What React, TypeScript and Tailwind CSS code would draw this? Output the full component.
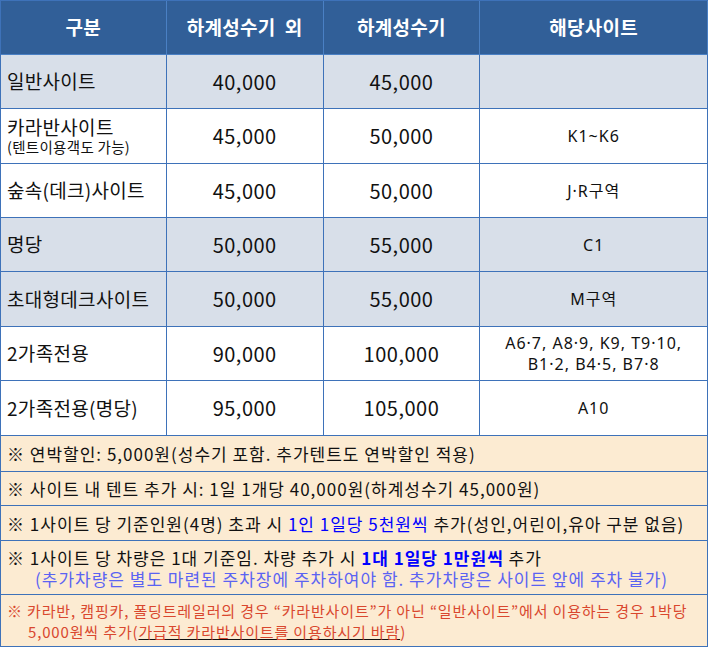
import React from "react";

const FONT = { fontFamily: '"Noto Sans CJK KR", "Noto Sans", sans-serif' };

type Row = {
  label: React.ReactNode;
  off: string;
  peak: string;
  site: React.ReactNode;
  striped: boolean;
  h: string;
};

const rows: Row[] = [
  { label: "일반사이트", off: "40,000", peak: "45,000", site: "", striped: true, h: "h-[54px]" },
  {
    label: (
      <div>
        <div className="text-[19px] leading-[22px]">카라반사이트</div>
        <div className="text-[14.5px] leading-[18px]">(텐트이용객도 가능)</div>
      </div>
    ),
    off: "45,000",
    peak: "50,000",
    site: "K1~K6",
    striped: false,
    h: "h-[55px]",
  },
  { label: "숲속(데크)사이트", off: "45,000", peak: "50,000", site: "J·R구역", striped: false, h: "h-[54px]" },
  { label: "명당", off: "50,000", peak: "55,000", site: "C1", striped: true, h: "h-[54px]" },
  { label: "초대형데크사이트", off: "50,000", peak: "55,000", site: "M구역", striped: true, h: "h-[55px]" },
  {
    label: "2가족전용",
    off: "90,000",
    peak: "100,000",
    site: (
      <div className="leading-[21px]">
        <div>A6·7, A8·9, K9, T9·10,</div>
        <div>B1·2, B4·5, B7·8</div>
      </div>
    ),
    striped: false,
    h: "h-[54px]",
  },
  { label: "2가족전용(명당)", off: "95,000", peak: "105,000", site: "A10", striped: false, h: "h-[55px]" },
];

function Note({ h, children }: { h: string; children: React.ReactNode }) {
  return (
    <div className={`${h} flex flex-col justify-center whitespace-nowrap border-b border-r border-[#3e72b9] bg-[#fcebd2] px-[6px]`}>
      {children}
    </div>
  );
}

export default function App() {
  return (
    <div className="w-[709px] bg-white text-[#111]" style={FONT}>
      <div className="w-[708px] border-l border-t border-[#3e72b9]">
        {/* 헤더 */}
        <div className="flex h-[54px] bg-[#315f98] text-[19px] font-bold tracking-[0.3px] text-white">
          <div className="flex w-[166px] items-center justify-center border-r border-b border-[#4a80c4]">구분</div>
          <div className="flex w-[157px] items-center justify-center border-r border-b border-[#4a80c4]">하계성수기&nbsp; 외</div>
          <div className="flex w-[157px] items-center justify-center border-r border-b border-[#4a80c4]">하계성수기</div>
          <div className="flex w-[228px] items-center justify-center border-r border-b border-[#4a80c4]">해당사이트</div>
        </div>

        {rows.map((r, i) => (
          <div key={i} className={`flex ${r.h} ${r.striped ? "bg-[#d8dfe9]" : "bg-white"}`}>
            <div className="flex w-[166px] items-center border-r border-b border-[#3e72b9] pl-[6px] text-[19px] tracking-[0.3px]">
              {r.label}
            </div>
            <div className="flex w-[157px] items-center justify-center border-r border-b border-[#3e72b9] text-[20px] tracking-[0.5px]">
              {r.off}
            </div>
            <div className="flex w-[157px] items-center justify-center border-r border-b border-[#3e72b9] text-[20px] tracking-[0.5px]">
              {r.peak}
            </div>
            <div className="flex w-[228px] items-center justify-center border-r border-b border-[#3e72b9] text-center font-['Noto_Sans','Noto_Sans_CJK_KR',sans-serif] text-[16px] tracking-[1px]">
              {r.site}
            </div>
          </div>
        ))}

        {/* 안내사항 */}
        <div className="text-[17px] leading-[21px] tracking-[1px]">
          <Note h="h-[36px]">
            <div>※ 연박할인: 5,000원(성수기 포함. 추가텐트도 연박할인 적용)</div>
          </Note>
          <Note h="h-[34px]">
            <div>※ 사이트 내 텐트 추가 시: 1일 1개당 40,000원(하계성수기 45,000원)</div>
          </Note>
          <Note h="h-[35px]">
            <div>
              ※ 1사이트 당 기준인원(4명) 초과 시 <span className="text-[#0000ff]">1인 1일당 5천원씩</span> 추가(성인,어린이,유아 구분 없음)
            </div>
          </Note>
          <Note h="h-[54px]">
            <div>
              ※ 1사이트 당 차량은 1대 기준임. 차량 추가 시{" "}
              <span className="font-semibold text-[#0000ff]">1대 1일당 1만원씩</span> 추가
            </div>
            <div className="pl-[28px] text-[#5b63f2]">
              (추가차량은 별도 마련된 주차장에 주차하여야 함. 추가차량은 사이트 앞에 주차 불가)
            </div>
          </Note>
          <Note h="h-[52px]">
            <div className="text-[15px] leading-[21px] tracking-[0.85px] text-[#d9472e]">
              <div>※ 카라반, 캠핑카, 폴딩트레일러의 경우 “카라반사이트”가 아닌 “일반사이트”에서 이용하는 경우 1박당</div>
              <div className="pl-[21px]">
                5,000원씩 추가(<span className="underline decoration-[#111]">가급적 카라반사이트를 이용하시기 바람</span>)
              </div>
            </div>
          </Note>
        </div>
      </div>
    </div>
  );
}
